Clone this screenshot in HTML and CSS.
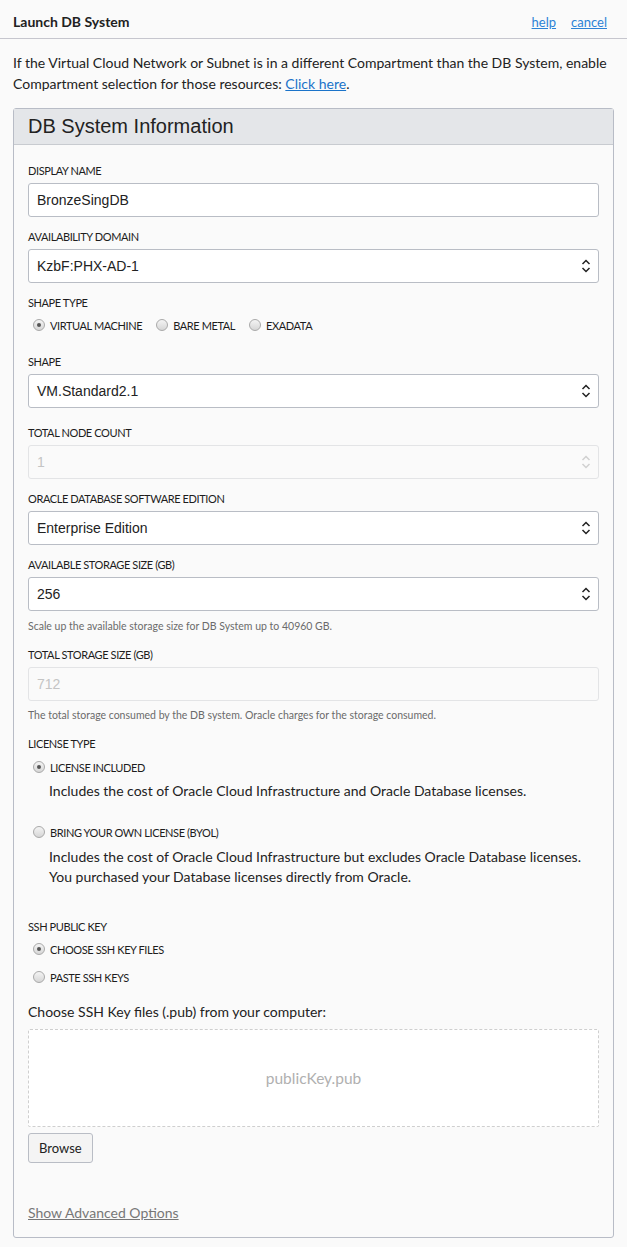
FILE: index.html
```html
<!DOCTYPE html>
<html>
<head>
<meta charset="utf-8">
<link rel="stylesheet" href="styles.css">
</head>
<body>
<div class="topbar">
  <div class="title">Launch DB System</div>
  <div class="toplinks"><a href="#">help</a><a href="#">cancel</a></div>
</div>
<p class="intro">If the Virtual Cloud Network or Subnet is in a different Compartment than the DB System, enable Compartment selection for those resources: <a href="#">Click here</a>.</p>

<div class="panel">
  <div class="panel-head">DB System Information</div>
  <div class="panel-body">
    <div class="group">
      <div class="label">DISPLAY NAME</div>
      <div class="field">BronzeSingDB</div>
    </div>
    <div class="group">
      <div class="label">AVAILABILITY DOMAIN</div>
      <div class="field select">KzbF:PHX-AD-1<svg class="chev" viewBox="0 0 10 16"><path d="M1.5 6 L5 2.5 L8.5 6 M1.5 10 L5 13.5 L8.5 10"/></svg></div>
    </div>
    <div class="group">
      <div class="label">SHAPE TYPE</div>
      <div class="radio-row">
        <span class="radio"><span class="dot on"></span>VIRTUAL MACHINE</span>
        <span class="radio"><span class="dot"></span>BARE METAL</span>
        <span class="radio"><span class="dot"></span>EXADATA</span>
      </div>
    </div>
    <div class="group wide">
      <div class="label">SHAPE</div>
      <div class="field select">VM.Standard2.1<svg class="chev" viewBox="0 0 10 16"><path d="M1.5 6 L5 2.5 L8.5 6 M1.5 10 L5 13.5 L8.5 10"/></svg></div>
    </div>
    <div class="group">
      <div class="label">TOTAL NODE COUNT</div>
      <div class="field select disabled">1<svg class="chev" viewBox="0 0 10 16"><path d="M1.5 6 L5 2.5 L8.5 6 M1.5 10 L5 13.5 L8.5 10"/></svg></div>
    </div>
    <div class="group">
      <div class="label">ORACLE DATABASE SOFTWARE EDITION</div>
      <div class="field select">Enterprise Edition<svg class="chev" viewBox="0 0 10 16"><path d="M1.5 6 L5 2.5 L8.5 6 M1.5 10 L5 13.5 L8.5 10"/></svg></div>
    </div>
    <div class="group helped">
      <div class="label">AVAILABLE STORAGE SIZE (GB)</div>
      <div class="field select">256<svg class="chev" viewBox="0 0 10 16"><path d="M1.5 6 L5 2.5 L8.5 6 M1.5 10 L5 13.5 L8.5 10"/></svg></div>
      <div class="help">Scale up the available storage size for DB System up to 40960 GB.</div>
    </div>
    <div class="group helped">
      <div class="label">TOTAL STORAGE SIZE (GB)</div>
      <div class="field disabled">712</div>
      <div class="help second">The total storage consumed by the DB system. Oracle charges for the storage consumed.</div>
    </div>
    <div class="group">
      <div class="label">LICENSE TYPE</div>
      <div class="opt">
        <span class="radio"><span class="dot on"></span>LICENSE INCLUDED</span>
        <div class="desc">Includes the cost of Oracle Cloud Infrastructure and Oracle Database licenses.</div>
      </div>
      <div class="opt">
        <span class="radio"><span class="dot"></span>BRING YOUR OWN LICENSE (BYOL)</span>
        <div class="desc">Includes the cost of Oracle Cloud Infrastructure but excludes Oracle Database licenses. You purchased your Database licenses directly from Oracle.</div>
      </div>
    </div>
    <div class="group ssh">
      <div class="label">SSH PUBLIC KEY</div>
      <div class="stack">
        <span class="radio"><span class="dot on"></span>CHOOSE SSH KEY FILES</span>
        <span class="radio"><span class="dot"></span>PASTE SSH KEYS</span>
      </div>
      <div class="choose">Choose SSH Key files (.pub) from your computer:</div>
      <div class="dropzone">publicKey.pub</div>
      <button class="btn">Browse</button>
    </div>
    <a class="adv" href="#">Show Advanced Options</a>
  </div>
</div>
</body>
</html>
```

FILE: styles.css
```css
html, body {
  margin: 0;
  padding: 0;
  background: #fafafa;
  font-family: "Lato", "Open Sans", sans-serif;
  color: #222;
}
a { color: #1a73c9; }
.topbar {
  display: flex;
  justify-content: space-between;
  align-items: center;
  height: 39px;
  padding: 0 20px 0 13px;
  border-bottom: 1px solid #c6c6ce;
  box-sizing: border-box;
}
.title {
  font-size: 14px;
  font-weight: 700;
  color: #222;
  padding-top: 5px;
}
.toplinks {
  display: flex;
  gap: 15px;
  font-size: 13px;
  padding-top: 5px;
}
.toplinks a { color: #2d82d6; }
.intro {
  margin: 13px 13px 0 13px;
  font-size: 14px;
  line-height: 21px;
  color: #222;
}
.intro a { color: #1a73c9; }
.panel {
  margin: 14px 13px 10px 13px;
  border: 1px solid #b8bcc6;
  border-radius: 3px;
  background: #fafafa;
}
.panel-head {
  height: 35px;
  background: #e4e6e9;
  border-bottom: 1px solid #c8cbd0;
  font-family: "Liberation Sans", Arial, sans-serif;
  font-size: 20px;
  line-height: 35px;
  padding-left: 14px;
  color: #222;
}
.panel-body {
  padding: 19px 14px 16px 14px;
}
.group { margin-bottom: 13px; }
.group.wide { margin-bottom: 18px; }
.group.helped { margin-bottom: 15px; }
.label {
  font-size: 11px;
  line-height: 14px;
  letter-spacing: -0.4px;
  margin-bottom: 5px;
  color: #1d1d1d;
}
.field {
  position: relative;
  height: 34px;
  box-sizing: border-box;
  border: 1px solid #b9bdc5;
  border-radius: 3px;
  background: #fff;
  font-family: "Liberation Sans", Arial, sans-serif;
  font-size: 14px;
  line-height: 32px;
  padding-left: 8px;
  color: #222;
}
.field.disabled {
  background: #fafafa;
  border-color: #e3e4e6;
  color: #c4c4c4;
}
.chev {
  position: absolute;
  right: 7px;
  top: 8px;
  width: 10px;
  height: 16px;
  fill: none;
  stroke: #222;
  stroke-width: 1.5;
}
.disabled .chev { stroke: #d0d0d0; }
.radio-row {
  display: flex;
  gap: 14px;
  margin-left: 5px;
  margin-top: 9px;
  margin-bottom: 22px;
}
.radio {
  display: inline-flex;
  align-items: center;
  font-size: 11px;
  line-height: 14px;
  letter-spacing: -0.4px;
  color: #1d1d1d;
}
.dot {
  display: inline-block;
  width: 12px;
  height: 12px;
  box-sizing: border-box;
  border: 1px solid #a9a9a9;
  border-radius: 50%;
  background: linear-gradient(#f4f4f4, #d6d6d6);
  margin-right: 5px;
  position: relative;
  top: -1px;
}
.dot.on::after {
  content: "";
  position: absolute;
  left: 3px;
  top: 3px;
  width: 4px;
  height: 4px;
  border-radius: 50%;
  background: #555;
}
.opt { margin-left: 5px; }
.opt .radio { margin-top: 5px; }
.desc {
  margin-left: 16px;
  margin-top: 4px;
  font-size: 14px;
  line-height: 20px;
  color: #222;
}
.opt + .opt { margin-top: 20px; }
.opt + .opt .desc { margin-top: 5px; }
.help {
  margin-top: 8px;
  font-size: 10.5px;
  line-height: 14px;
  color: #6b6b6b;
}
.help.second { margin-top: 7px; }
.ssh { margin-top: 33px; }
.stack {
  display: flex;
  flex-direction: column;
  gap: 14px;
  margin-left: 5px;
  margin-top: 9px;
}
.choose {
  margin-top: 18px;
  font-size: 14px;
  line-height: 18px;
  color: #222;
}
.dropzone {
  margin-top: 8px;
  height: 98px;
  box-sizing: border-box;
  border: 1px dashed #cfcfcf;
  border-radius: 2px;
  background: #fff;
  display: flex;
  align-items: center;
  justify-content: center;
  font-size: 15.5px;
  color: #b0b0b0;
}
.btn {
  margin-top: 6px;
  height: 30px;
  padding: 0 10px;
  border: 1px solid #b9bdc5;
  border-radius: 3px;
  background: #f4f4f4;
  font-family: "Lato", "Open Sans", sans-serif;
  font-size: 13px;
  color: #222;
}
.adv {
  display: inline-block;
  margin-top: 28px;
  font-size: 14px;
  color: #777;
}
```
